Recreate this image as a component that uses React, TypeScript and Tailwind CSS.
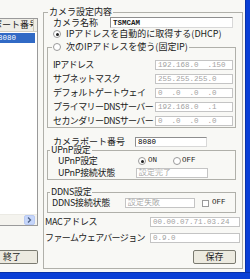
import React from 'react';

const BG = 'bg-[#f8f8f5]';

function Field({ value, w, enabled = false }: { value: string; w: string; enabled?: boolean }) {
  return (
    <div
      className={`${w} h-[10px] shrink-0 flex items-center px-[2px] bg-white border font-['Liberation_Mono',monospace] text-[7.5px] leading-[8px] whitespace-pre ${
        enabled ? 'border-[#8e8e8e] border-b-[#d8d8d8] border-r-[#d8d8d8] text-black' : 'border-[#c4c4c4] text-[#a2a2a2]'
      }`}
    >
      {value}
    </div>
  );
}

function Radio({ on }: { on: boolean }) {
  return (
    <span className="w-[8px] h-[8px] rounded-full border border-[#9a9a9a] bg-white flex items-center justify-center shrink-0">
      {on && <span className="w-[3px] h-[3px] rounded-full bg-[#222]" />}
    </span>
  );
}

function Label({ text, w }: { text: string; w: string }) {
  return <div className={`${w} shrink-0 leading-[10px] whitespace-nowrap`}>{text}</div>;
}

function WinButton({ text, className }: { text: string; className: string }) {
  return (
    <div className={`h-[14px] flex items-center bg-[#eceae0] border border-[#7a7a70] leading-[10px] ${className}`}>
      {text}
    </div>
  );
}

export default function App() {
  return (
    <div className={`w-[250px] h-[279px] flex flex-col overflow-hidden ${BG} text-[9px] text-[#1a1a1a] font-['Noto_Sans_CJK_JP',sans-serif]`}>
      <div className="flex h-[272px] shrink-0">
        <div className="w-[245px] flex items-start">
          {/* left list */}
          <div className="w-[38px] shrink-0 flex flex-col">
            <div className="mt-[18px] h-[208px] flex flex-col bg-white border-t border-r border-b border-[#9a9a9a] overflow-hidden">
              <div className="h-[13px] shrink-0 flex items-center bg-[#efeee7] border-b border-[#d2cfc2]">
                <div className="w-[34px] h-full flex items-center border-r border-[#c8c5b8] overflow-hidden">
                  <span className="ml-[-7px] whitespace-nowrap leading-[10px]">ポート番号</span>
                </div>
              </div>
              <div className="mt-[1px] h-[10px] shrink-0 w-[35px] flex items-center bg-[#316ac5] text-white overflow-hidden">
                <span className="ml-[-2px] font-['Liberation_Mono',monospace] text-[7.5px] leading-[8px]">8080</span>
              </div>
              <div className="flex-1" />
              <div className="h-[11px] shrink-0 flex bg-[#f4f3ee] border-t border-[#ebeae4]">
                <div className="flex-1" />
                <div className="w-[11px] mr-[2px] flex items-center justify-center bg-[#c6d6fa] border border-[#b8c9f2] rounded-[2px]">
                  <svg width="5" height="6" viewBox="0 0 5 6">
                    <path d="M1 0.5 L3.5 3 L1 5.5" stroke="#4d6185" strokeWidth="1.3" fill="none" />
                  </svg>
                </div>
              </div>
            </div>
            <WinButton text="終了" className="mt-[24px] w-[38px] pl-[3px] border-l-0 rounded-r-[2px]" />
          </div>

          {/* settings group */}
          <div className="ml-[5px] mt-[12px] w-[200px] pb-[4px] border border-[#b0b0aa] flex flex-col">
            <div className={`-mt-[6px] ml-[4px] px-[1px] w-fit h-[10px] shrink-0 leading-[10px] ${BG}`}>カメラ設定内容</div>

            <div className="h-[11px] shrink-0 flex items-center">
              <Label text="カメラ名称" w="ml-[9px] w-[57px]" />
              <div className="w-[123px] h-[11px] flex items-center px-[2px] bg-white border border-[#8e8e8e] border-b-[#d8d8d8] border-r-[#d8d8d8] font-['Liberation_Mono',monospace] text-[7.5px] font-bold leading-[8px]">
                TSMCAM
              </div>
            </div>

            <div className="mt-[1px] h-[10px] shrink-0 flex items-center">
              <span className="ml-[9px]"><Radio on /></span>
              <span className="ml-[5px] leading-[10px] whitespace-nowrap">IPアドレスを自動的に取得する(DHCP)</span>
            </div>

            {/* static IP group */}
            <div className="mt-[8px] ml-[3px] w-[189px] shrink-0 border border-[#b0b0aa] pb-[1px] flex flex-col">
              <div className={`-mt-[6px] ml-[4px] px-[1px] w-fit h-[10px] flex items-center ${BG}`}>
                <Radio on={false} />
                <span className="ml-[5px] leading-[10px] whitespace-nowrap">次のIPアドレスを使う(固定IP)</span>
              </div>
              {[
                ['IPアドレス', '192.168.0  .150'],
                ['サブネットマスク', '255.255.255.0'],
                ['デフォルトゲートウェイ', '0  .0  .0  .0'],
                ['プライマリーDNSサーバー', '192.168.0  .1'],
                ['セカンダリーDNSサーバー', '0  .0  .0  .0'],
              ].map(([l, v], i) => (
                <div key={l} className={`${i === 0 ? 'mt-[8px]' : 'mt-[4px]'} h-[10px] flex items-center`}>
                  <Label text={l} w="ml-[5px] w-[102px] tracking-[-0.6px]" />
                  <Field value={v} w="w-[78px]" />
                </div>
              ))}
            </div>

            <div className="mt-[9px] h-[10px] shrink-0 flex items-center">
              <Label text="カメラポート番号" w="ml-[9px] w-[82px]" />
              <Field value="8080" w="w-[72px]" enabled />
            </div>

            {/* UPnP group */}
            <div className="mt-[3px] ml-[3px] w-[189px] shrink-0 border border-[#b0b0aa] pb-[1px] flex flex-col">
              <div className={`-mt-[6px] ml-[2px] px-[1px] w-fit h-[10px] leading-[10px] tracking-[-0.3px] ${BG}`}>UPnP設定</div>
              <div className="mt-[1px] h-[10px] flex items-center">
                <Label text="UPnP設定" w="ml-[10px] w-[80px] tracking-[-0.3px]" />
                <Radio on />
                <span className="ml-[2px] w-[25px] font-['Liberation_Mono',monospace] text-[7.5px]">ON</span>
                <Radio on={false} />
                <span className="ml-[1px] font-['Liberation_Mono',monospace] text-[7.5px]">OFF</span>
              </div>
              <div className="mt-[2px] h-[10px] flex items-center">
                <Label text="UPnP接続状態" w="ml-[10px] w-[78px] tracking-[-0.3px]" />
                <Field value="設定完了" w="w-[72px]" />
              </div>
            </div>

            {/* DDNS group */}
            <div className="mt-[12px] ml-[3px] w-[189px] shrink-0 border border-[#b0b0aa] pb-[4px] flex flex-col">
              <div className={`-mt-[6px] ml-[2px] px-[1px] w-fit h-[10px] leading-[10px] tracking-[-0.3px] ${BG}`}>DDNS設定</div>
              <div className="mt-[1px] h-[10px] flex items-center">
                <Label text="DDNS接続状態" w="ml-[4px] w-[73px] tracking-[-0.3px]" />
                <Field value="設定失敗" w="w-[70px]" />
                <span className="ml-[7px] w-[7px] h-[7px] border border-[#9a9a9a] bg-white shrink-0" />
                <span className="ml-[3px] font-['Liberation_Mono',monospace] text-[7.5px]">OFF</span>
              </div>
            </div>

            <div className="mt-[4px] h-[10px] shrink-0 flex items-center">
              <Label text="MACアドレス" w="ml-[1px] w-[105px] tracking-[-0.3px]" />
              <Field value="00.00.07.71.03.24" w="w-[90px]" />
            </div>
            <div className="mt-[6px] h-[10px] shrink-0 flex items-center">
              <Label text="ファームウェアバージョン" w="ml-[1px] w-[105px] tracking-[-0.6px]" />
              <Field value="0.9.0" w="w-[90px]" />
            </div>

            <div className="mt-[7px] flex justify-end pr-[6px]">
              <WinButton text="保存" className="w-[43px] justify-center rounded-[2px]" />
            </div>
          </div>
        </div>
        <div className="w-[5px] bg-[#0a3fd6] border-l border-[#0831a8]" />
      </div>
      <div className="h-[7px] bg-[#0a3fd6] border-t border-[#0831a8]" />
    </div>
  );
}
